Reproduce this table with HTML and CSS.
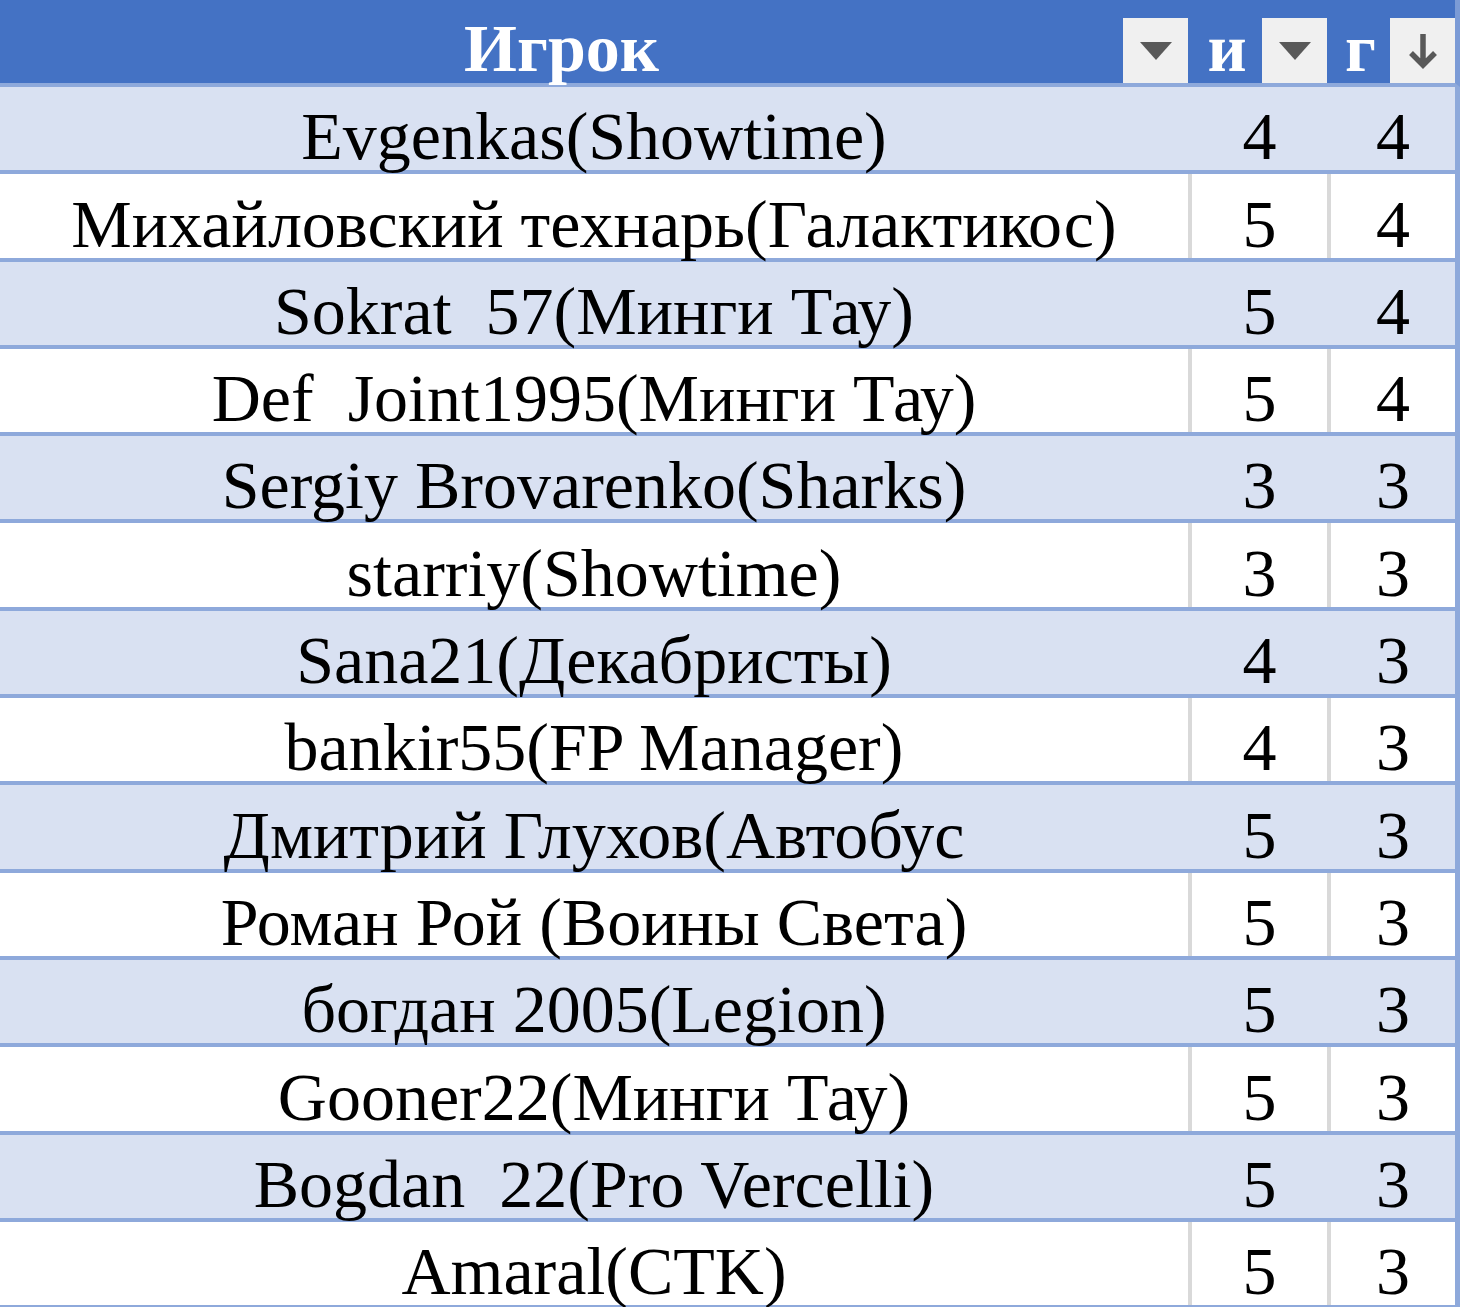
FILE: index.html
```html
<!DOCTYPE html>
<html lang="ru">
<head>
<meta charset="utf-8">
<title>Игрок</title>
<link rel="stylesheet" href="styles.css">
</head>
<body>
<div class="sheet">
  <div class="row head">
    <div class="cell c1"><span class="htext">Игрок</span><span class="fbtn"><svg width="32" height="18" viewBox="0 0 32 18"><polygon points="0,0 32,0 16,18" fill="#595959"/></svg></span></div>
    <div class="cell c2"><span class="htext">и</span><span class="fbtn"><svg width="32" height="18" viewBox="0 0 32 18"><polygon points="0,0 32,0 16,18" fill="#595959"/></svg></span></div>
    <div class="cell c3"><span class="htext">г</span><span class="fbtn"><svg width="30" height="36" viewBox="0 0 30 36"><path d="M15 1 V32 M3 20 L15 32 L27 20" fill="none" stroke="#595959" stroke-width="5.5" stroke-linejoin="miter"/></svg></span></div>
  </div>
  <div class="row band"><div class="cell c1">Evgenkas(Showtime)</div><div class="cell c2">4</div><div class="cell c3">4</div></div>
  <div class="row"><div class="cell c1">Михайловский технарь(Галактикос)</div><div class="cell c2">5</div><div class="cell c3">4</div></div>
  <div class="row band"><div class="cell c1">Sokrat  57(Минги Тау)</div><div class="cell c2">5</div><div class="cell c3">4</div></div>
  <div class="row"><div class="cell c1">Def  Joint1995(Минги Тау)</div><div class="cell c2">5</div><div class="cell c3">4</div></div>
  <div class="row band"><div class="cell c1">Sergiy Brovarenko(Sharks)</div><div class="cell c2">3</div><div class="cell c3">3</div></div>
  <div class="row"><div class="cell c1">starriy(Showtime)</div><div class="cell c2">3</div><div class="cell c3">3</div></div>
  <div class="row band"><div class="cell c1">Sana21(Декабристы)</div><div class="cell c2">4</div><div class="cell c3">3</div></div>
  <div class="row"><div class="cell c1">bankir55(FP Manager)</div><div class="cell c2">4</div><div class="cell c3">3</div></div>
  <div class="row band"><div class="cell c1">Дмитрий Глухов(Автобус</div><div class="cell c2">5</div><div class="cell c3">3</div></div>
  <div class="row"><div class="cell c1">Роман Рой (Воины Света)</div><div class="cell c2">5</div><div class="cell c3">3</div></div>
  <div class="row band"><div class="cell c1">богдан 2005(Legion)</div><div class="cell c2">5</div><div class="cell c3">3</div></div>
  <div class="row"><div class="cell c1">Gooner22(Минги Тау)</div><div class="cell c2">5</div><div class="cell c3">3</div></div>
  <div class="row band"><div class="cell c1">Bogdan  22(Pro Vercelli)</div><div class="cell c2">5</div><div class="cell c3">3</div></div>
  <div class="row"><div class="cell c1">Amaral(CTK)</div><div class="cell c2">5</div><div class="cell c3">3</div></div>
</div>
</body>
</html>
```
FILE: styles.css
```css
html, body {
  margin: 0;
  padding: 0;
  background: #ffffff;
  overflow: hidden;
}
.sheet {
  width: 1460px;
  font-family: "Liberation Serif", "Times New Roman", serif;
  font-size: 68px;
  color: #000;
}
.row {
  display: grid;
  grid-template-columns: 1188px 139px 128px;
  height: 83.3px;
  border-bottom: 4px solid #8EA9DB;
  border-right: 5px solid #8EA9DB;
  background: #ffffff;
}
.row.band {
  background: #D9E1F2;
}
.cell {
  display: flex;
  align-items: flex-end;
  justify-content: center;
  line-height: 1;
  white-space: pre;
  padding-bottom: 0;
}
.cell.c2, .cell.c3 {
  border-left: 4px solid #D9D9D9;
}
.row.band .cell.c2, .row.band .cell.c3 {
  border-left-color: transparent;
}
.row.head {
  height: 83px;
  background: #4472C4;
  border-right-color: #7B9BD6;
}
.row.head .cell {
  border-left-color: transparent;
  justify-content: flex-start;
  color: #ffffff;
  font-weight: bold;
}
.htext {
  flex: 1;
  text-align: center;
  padding-bottom: 1px;
}
.fbtn {
  width: 65px;
  height: 65px;
  background: #F0F0F0;
  display: flex;
  align-items: center;
  justify-content: center;
  flex: none;
}
```
